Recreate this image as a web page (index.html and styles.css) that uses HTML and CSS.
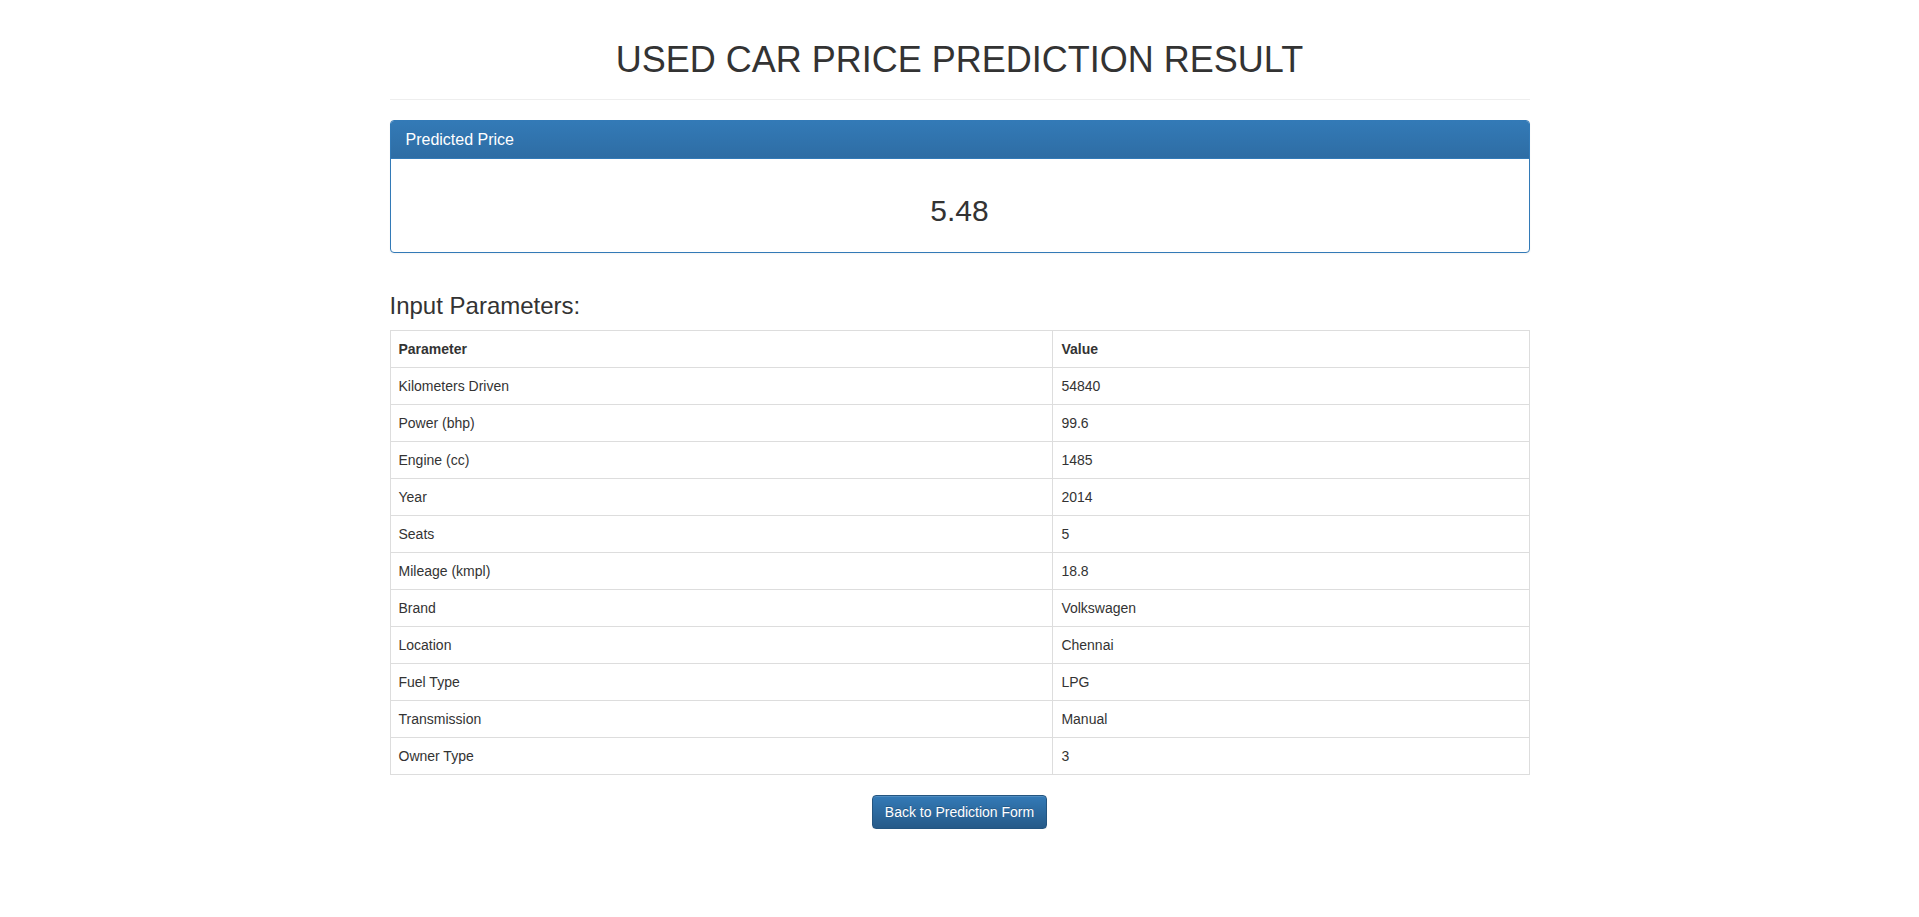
FILE: index.html
```html
<!DOCTYPE html>
<html lang="en">
<head>
<meta charset="utf-8">
<title>Used Car Price Prediction Result</title>
<link rel="stylesheet" href="styles.css">
</head>
<body>
<div class="container">
  <div class="page-header">
    <h1>USED CAR PRICE PREDICTION RESULT</h1>
  </div>
  <div class="panel">
    <div class="panel-heading"><h3 class="panel-title">Predicted Price</h3></div>
    <div class="panel-body"><h2 class="price">5.48</h2></div>
  </div>
  <h3 class="section-title">Input Parameters:</h3>
  <table class="table">
    <thead>
      <tr><th class="col-param">Parameter</th><th>Value</th></tr>
    </thead>
    <tbody>
      <tr><td>Kilometers Driven</td><td>54840</td></tr>
      <tr><td>Power (bhp)</td><td>99.6</td></tr>
      <tr><td>Engine (cc)</td><td>1485</td></tr>
      <tr><td>Year</td><td>2014</td></tr>
      <tr><td>Seats</td><td>5</td></tr>
      <tr><td>Mileage (kmpl)</td><td>18.8</td></tr>
      <tr><td>Brand</td><td>Volkswagen</td></tr>
      <tr><td>Location</td><td>Chennai</td></tr>
      <tr><td>Fuel Type</td><td>LPG</td></tr>
      <tr><td>Transmission</td><td>Manual</td></tr>
      <tr><td>Owner Type</td><td>3</td></tr>
    </tbody>
  </table>
  <div class="actions">
    <a class="btn" href="#">Back to Prediction Form</a>
  </div>
</div>
</body>
</html>
```
FILE: styles.css
```css
* { box-sizing: border-box; }
html, body { margin: 0; padding: 0; }
body {
  font-family: "Liberation Sans", Arial, Helvetica, sans-serif;
  font-size: 14px;
  line-height: 1.42857143;
  color: #333;
  background: #fff;
}
.container {
  width: 1170px;
  margin: 0 auto;
  padding: 0 15px;
}
.page-header {
  margin: 40px 0 20px;
  padding-bottom: 9px;
  border-bottom: 1px solid #eee;
}
.page-header h1 {
  margin: 0 0 10px;
  font-size: 36px;
  font-weight: 500;
  line-height: 1.1;
  text-align: center;
}
.panel {
  margin-bottom: 20px;
  background: #fff;
  border: 1px solid #337ab7;
  border-radius: 4px;
  box-shadow: 0 1px 2px rgba(0,0,0,.05);
}
.panel-heading {
  padding: 10px 15px;
  color: #fff;
  background-image: linear-gradient(to bottom, #337ab7 0, #2e6da4 100%);
  border-bottom: 1px solid #337ab7;
  border-top-left-radius: 3px;
  border-top-right-radius: 3px;
}
.panel-title {
  margin: 0;
  font-size: 16px;
  font-weight: 500;
  line-height: 1.1;
}
.panel-body { padding: 15px; }
.price {
  margin: 20px 0 10px;
  font-size: 30px;
  font-weight: 500;
  line-height: 1.1;
  text-align: center;
}
.section-title {
  margin: 40px 0 10px;
  font-size: 24px;
  font-weight: 500;
  line-height: 1.1;
}
.table {
  width: 100%;
  margin-bottom: 20px;
  border-collapse: collapse;
  border-spacing: 0;
  border: 1px solid #ddd;
}
.table th, .table td {
  padding: 8px;
  line-height: 1.42857143;
  text-align: left;
  vertical-align: top;
  border: 1px solid #ddd;
}
.table th { font-weight: bold; vertical-align: bottom; }
.col-param { width: 58.2%; }
.actions { text-align: center; }
.btn {
  display: inline-block;
  padding: 6px 12px;
  font-size: 14px;
  line-height: 1.42857143;
  color: #fff;
  text-decoration: none;
  text-shadow: 0 -1px 0 rgba(0,0,0,.2);
  background-image: linear-gradient(to bottom, #337ab7 0, #265a88 100%);
  border: 1px solid #245580;
  border-radius: 4px;
  box-shadow: inset 0 1px 0 rgba(255,255,255,.15), 0 1px 1px rgba(0,0,0,.075);
}
```
